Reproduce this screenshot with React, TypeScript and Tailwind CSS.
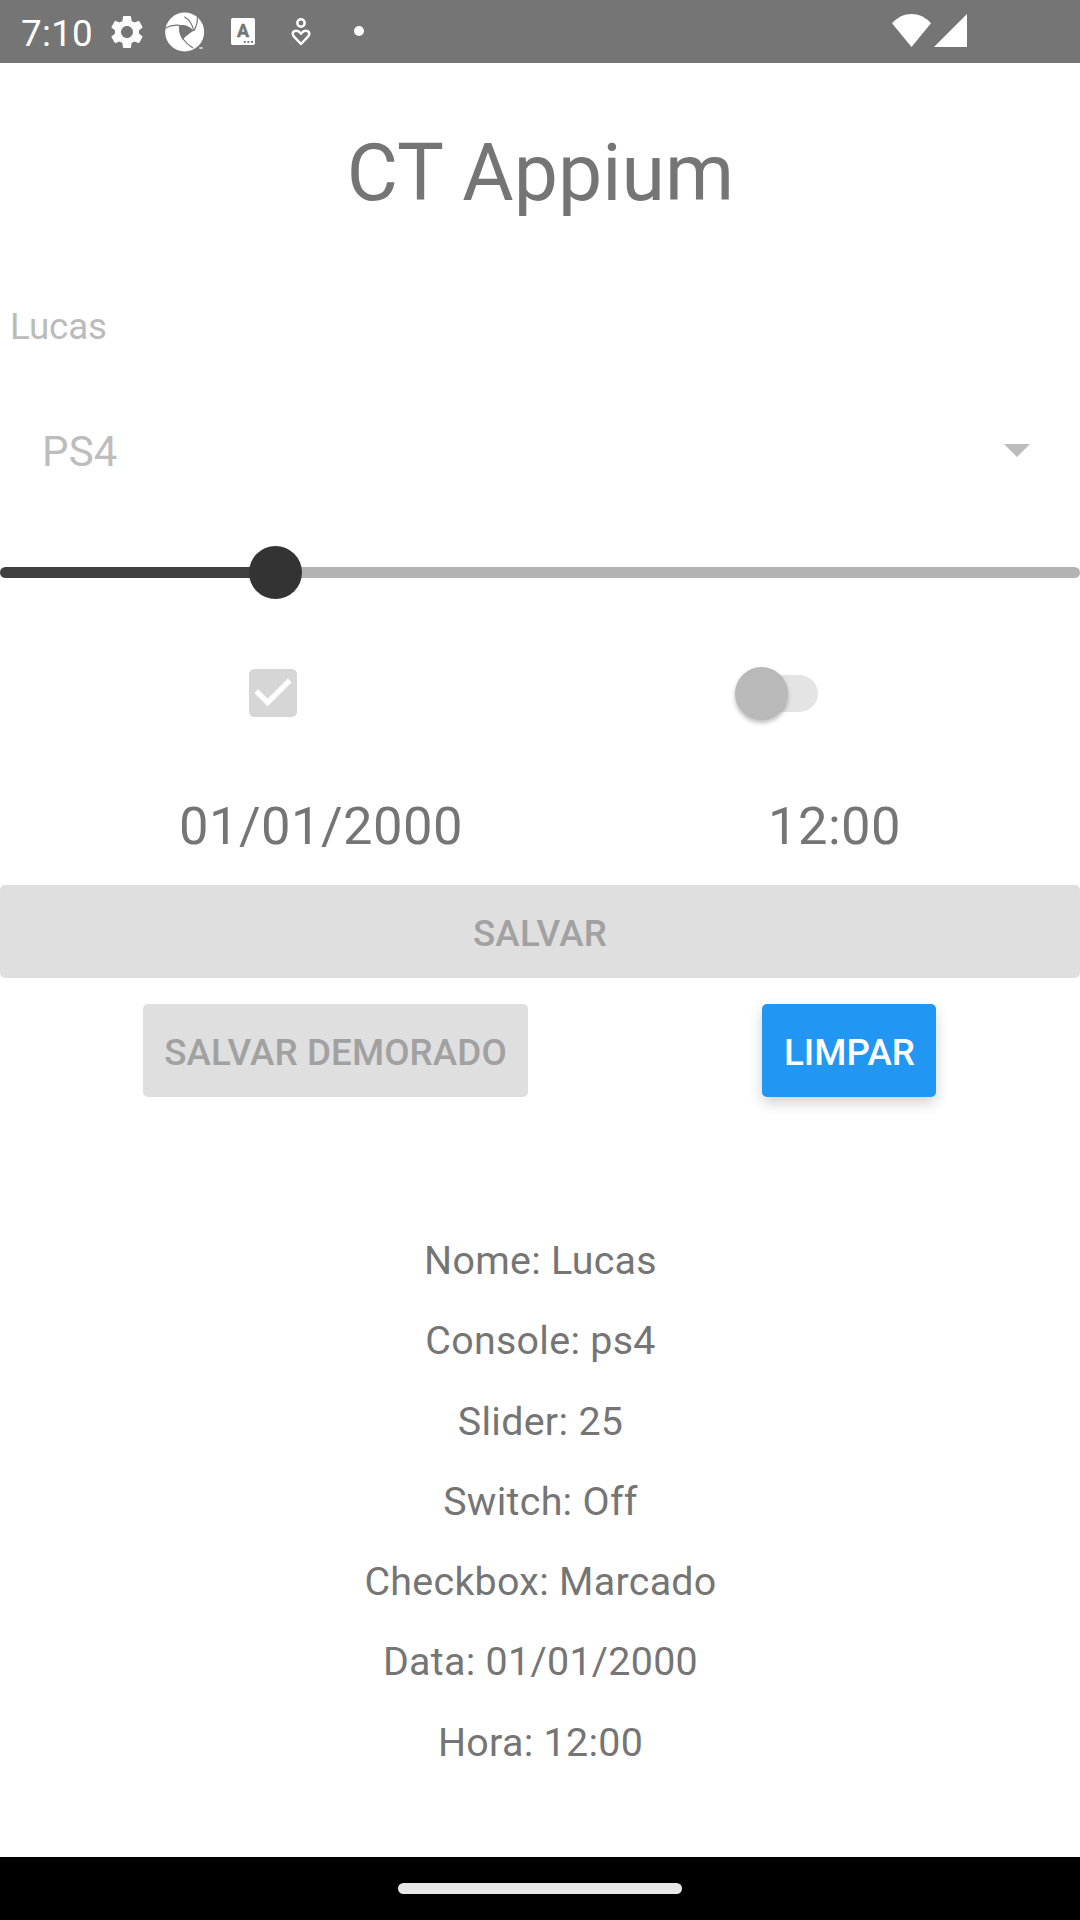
import { MdCheckBox, MdSettings } from "react-icons/md";

const results = [
  "Nome: Lucas",
  "Console: ps4",
  "Slider: 25",
  "Switch: Off",
  "Checkbox: Marcado",
  "Data: 01/01/2000",
  "Hora: 12:00",
];

function ApertureIcon() {
  return (
    <svg width="40" height="40" viewBox="0 0 120 120" className="shrink-0">
      <circle cx="59" cy="60" r="58.5" fill="#fff" />
      <path
        d="M44 40C58 37 75 43 86 56C75 62 62 72 53 83C45 71 41 56 44 40Z"
        fill="#757575"
      />
      <g fill="none" stroke="#757575" strokeWidth="3.5">
        <path d="M0 49C12 42 27 38 44 40" />
        <path d="M58 14C72 22 83 38 86 57" />
        <path d="M86 57C93 46 98 30 97 16" />
        <path d="M44 40C40 68 60 92 84 108" />
      </g>
      <path d="M103 106h10v4h-10z" fill="#fff" />
    </svg>
  );
}

function LetterCardIcon() {
  return (
    <svg width="24" height="27" viewBox="0 0 24 27" className="shrink-0">
      <rect width="24" height="27" rx="1.8" fill="#fff" />
      <text
        x="12"
        y="19.4"
        textAnchor="middle"
        fontFamily="Roboto, sans-serif"
        fontWeight="700"
        fontSize="18"
        fill="#757575"
        stroke="#757575"
        strokeWidth="0.5"
        strokeLinejoin="round"
      >
        A
      </text>
      <g fill="#757575">
        <rect x="12.8" y="23" width="2" height="1.8" />
        <rect x="16.4" y="23" width="2" height="1.8" />
        <rect x="20" y="23" width="2" height="1.8" />
      </g>
    </svg>
  );
}

function HeartPersonIcon() {
  return (
    <svg width="20" height="28" viewBox="0 0 60 84" className="shrink-0">
      <g fill="none" stroke="#fff" strokeWidth="7.5" strokeLinejoin="round">
        <circle cx="30" cy="15" r="11" />
        <path d="M30 78L9 56C2 48 5 38 16 38C23 38 26 42 30 47C34 42 37 38 44 38C55 38 58 48 51 56Z" />
      </g>
    </svg>
  );
}

function StatusBar() {
  return (
    <header className="flex h-[63px] shrink-0 items-center bg-[#757575] pl-[21px] text-white">
      <span className="w-[86px] pt-[4px] text-[36.75px] leading-[44px] tracking-[0.3px]">7:10</span>
      <MdSettings size={40} className="shrink-0" />
      <div className="ml-[18px] flex h-10 items-center">
        <ApertureIcon />
      </div>
      <div className="ml-[26px]">
        <LetterCardIcon />
      </div>
      <div className="ml-9">
        <HeartPersonIcon />
      </div>
      <div className="mb-px ml-[43px] size-[10px] rounded-full bg-white" />
      <svg width="75" height="33" viewBox="0 0 75 33" className="mr-[113px] ml-auto mt-[-2px] shrink-0" fill="#fff">
        <path d="M0 9.3C11 -3.1 28 -3.1 39 9.3L19.5 33Z" />
        <path d="M75 0V33H42Z" />
      </svg>
    </header>
  );
}

export default function App() {
  return (
    <div className="flex h-[1920px] w-[1080px] flex-col overflow-hidden bg-white font-[Roboto,sans-serif] text-[#757575]">
      <StatusBar />

      <h1 className="h-[220px] pl-px text-center text-[78.75px] leading-[220px] tracking-[0.1px]">CT Appium</h1>

      <div className="h-[87px] pl-[10px] text-[36.75px] leading-[87px] tracking-[-0.1px] text-[#bbbbbb]">Lucas</div>

      <div className="flex h-[163px] items-center justify-between pr-[50px] pl-[42px] text-[#bdbdbd]">
        <span className="text-[42px] leading-[163px] tracking-[0.2px]">PS4</span>
        <svg width="26" height="13" viewBox="0 0 26 13" className="mb-[3px]">
          <path d="M0 0H26L13 13Z" fill="#bcbcbc" />
        </svg>
      </div>

      <div className="flex h-[79px] items-center">
        <div className="h-[11px] w-[251px] rounded-l-full bg-[#404040]" />
        <div className="z-10 -mx-[2px] size-[53px] rounded-full bg-[#333333]" />
        <div className="h-[11px] flex-1 rounded-r-full bg-[#b3b3b3]" />
      </div>

      <div className="flex h-[162px] items-center justify-between pr-[262px] pl-[241px]">
        <MdCheckBox size={64} color="#d6d6d6" />
        <div className="flex h-[37px] w-[79px] items-center rounded-full bg-[#e4e4e4]">
          <div className="-ml-1 size-[53px] shrink-0 rounded-full bg-[#b9b9b9] shadow-[0_3px_4px_rgba(0,0,0,0.25)]" />
        </div>
      </div>

      <div className="mb-[7px] flex h-[104px] items-center justify-between px-[179px] text-[52.5px] leading-[104px] tracking-[0.45px]">
        <span>01/01/2000</span>
        <span>12:00</span>
      </div>

      <button className="h-[93px] shrink-0 rounded-[5px] bg-[#dfdfdf] pt-[4px] text-[36.75px] leading-[44px] font-medium tracking-[0.2px] text-[#a1a1a1]">
        SALVAR
      </button>

      <div className="mt-[26px] flex justify-between pr-[144px] pl-[143px] text-[36.75px] leading-[44px] font-medium">
        <button className="h-[93px] w-[385px] rounded-[5px] bg-[#dfdfdf] pt-[4px] tracking-[0.1px] text-[#a1a1a1]">
          SALVAR DEMORADO
        </button>
        <button className="h-[93px] w-[174px] rounded-[5px] bg-[#2196f3] pt-[4px] pl-px tracking-[0.1px] text-white shadow-[0_6px_14px_rgba(0,0,0,0.18)]">
          LIMPAR
        </button>
      </div>

      <div className="mt-[124px] pl-px text-center text-[39.375px] tracking-[0.3px]">
        {results.map((line) => (
          <p key={line} className="h-[80.25px] leading-[80.25px]">
            {line}
          </p>
        ))}
      </div>

      <nav className="mt-auto flex h-[63px] shrink-0 justify-center bg-black pt-[26px]">
        <div className="h-[11px] w-[284px] rounded-full bg-[#e8e8e8]" />
      </nav>
    </div>
  );
}
